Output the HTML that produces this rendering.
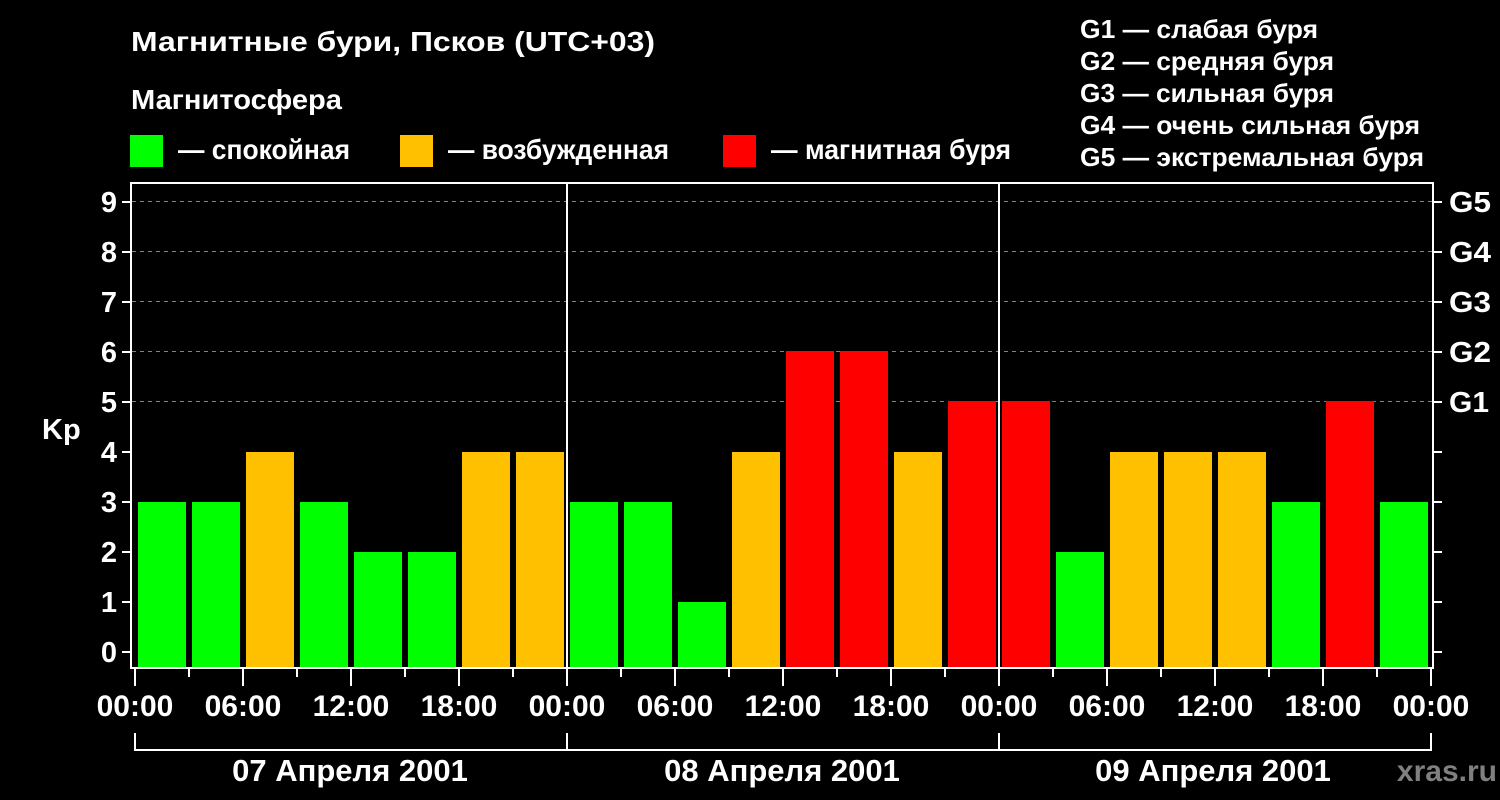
<!DOCTYPE html>
<html><head><meta charset="utf-8"><style>
html,body{margin:0;padding:0;background:#000;}
svg{display:block;font-family:"Liberation Sans",Arial,sans-serif;font-weight:bold;}
</style></head><body>
<svg width="1500" height="800" viewBox="0 0 1500 800" xmlns="http://www.w3.org/2000/svg">
<rect width="1500" height="800" fill="#000"/>
<g fill="#fff">
<text x="131" y="51" font-size="28" textLength="524" lengthAdjust="spacingAndGlyphs">Магнитные бури, Псков (UTC+03)</text>
<text x="131" y="109" font-size="28" textLength="211" lengthAdjust="spacingAndGlyphs">Магнитосфера</text>
<text x="178" y="159" font-size="28" textLength="172" lengthAdjust="spacingAndGlyphs">— спокойная</text>
<text x="448" y="159" font-size="28" textLength="221" lengthAdjust="spacingAndGlyphs">— возбужденная</text>
<text x="771" y="159" font-size="28" textLength="240" lengthAdjust="spacingAndGlyphs">— магнитная буря</text>
<g font-size="26">
<text x="1080" y="38" textLength="238" lengthAdjust="spacingAndGlyphs">G1 — слабая буря</text>
<text x="1080" y="70" textLength="254" lengthAdjust="spacingAndGlyphs">G2 — средняя буря</text>
<text x="1080" y="102" textLength="254" lengthAdjust="spacingAndGlyphs">G3 — сильная буря</text>
<text x="1080" y="134" textLength="340" lengthAdjust="spacingAndGlyphs">G4 — очень сильная буря</text>
<text x="1080" y="166" textLength="344" lengthAdjust="spacingAndGlyphs">G5 — экстремальная буря</text>
</g>
</g>
<rect x="130" y="135" width="33" height="32" fill="#00ff00"/>
<rect x="400" y="135" width="33" height="32" fill="#ffc000"/>
<rect x="723" y="135" width="33" height="32" fill="#ff0000"/>

<g stroke="#808080" stroke-width="1" stroke-dasharray="4,4">
<line x1="132" y1="201.5" x2="1432" y2="201.5"/>
<line x1="132" y1="251.5" x2="1432" y2="251.5"/>
<line x1="132" y1="301.5" x2="1432" y2="301.5"/>
<line x1="132" y1="351.5" x2="1432" y2="351.5"/>
<line x1="132" y1="401.5" x2="1432" y2="401.5"/>
</g>

<g>
<rect x="138" y="502" width="48" height="166" fill="#00ff00"/>
<rect x="192" y="502" width="48" height="166" fill="#00ff00"/>
<rect x="246" y="452" width="48" height="216" fill="#ffc000"/>
<rect x="300" y="502" width="48" height="166" fill="#00ff00"/>
<rect x="354" y="552" width="48" height="116" fill="#00ff00"/>
<rect x="408" y="552" width="48" height="116" fill="#00ff00"/>
<rect x="462" y="452" width="48" height="216" fill="#ffc000"/>
<rect x="516" y="452" width="48" height="216" fill="#ffc000"/>
<rect x="570" y="502" width="48" height="166" fill="#00ff00"/>
<rect x="624" y="502" width="48" height="166" fill="#00ff00"/>
<rect x="678" y="602" width="48" height="66" fill="#00ff00"/>
<rect x="732" y="452" width="48" height="216" fill="#ffc000"/>
<rect x="786" y="351" width="48" height="317" fill="#ff0000"/>
<rect x="840" y="351" width="48" height="317" fill="#ff0000"/>
<rect x="894" y="452" width="48" height="216" fill="#ffc000"/>
<rect x="948" y="401" width="48" height="267" fill="#ff0000"/>
<rect x="1002" y="401" width="48" height="267" fill="#ff0000"/>
<rect x="1056" y="552" width="48" height="116" fill="#00ff00"/>
<rect x="1110" y="452" width="48" height="216" fill="#ffc000"/>
<rect x="1164" y="452" width="48" height="216" fill="#ffc000"/>
<rect x="1218" y="452" width="48" height="216" fill="#ffc000"/>
<rect x="1272" y="502" width="48" height="166" fill="#00ff00"/>
<rect x="1326" y="401" width="48" height="267" fill="#ff0000"/>
<rect x="1380" y="502" width="48" height="166" fill="#00ff00"/>
</g>

<g stroke="#fff" stroke-width="2" fill="none">
<rect x="131" y="183" width="1302" height="485"/>
<line x1="567" y1="183" x2="567" y2="668"/>
<line x1="999" y1="183" x2="999" y2="668"/>
<path d="M122 202H131M122 252H131M122 302H131M122 352H131M122 402H131M122 452H131M122 502H131M122 552H131M122 602H131M122 652H131"/>
<path d="M1433 202H1442M1433 252H1442M1433 302H1442M1433 352H1442M1433 402H1442M1433 452H1442M1433 502H1442M1433 552H1442M1433 602H1442M1433 652H1442"/>
<path d="M135 668V686M243 668V686M351 668V686M459 668V686M567 668V686M675 668V686M783 668V686M891 668V686M999 668V686M1107 668V686M1215 668V686M1323 668V686M1431 668V686"/>
<path d="M189 668V677M297 668V677M405 668V677M513 668V677M621 668V677M729 668V677M837 668V677M945 668V677M1053 668V677M1161 668V677M1269 668V677M1377 668V677"/>
<path d="M135 733V750H1431V733M567 733V750M999 733V750"/>
</g>

<g fill="#fff" font-size="29" text-anchor="end">
<text x="117" y="212">9</text><text x="117" y="262">8</text><text x="117" y="312">7</text>
<text x="117" y="362">6</text><text x="117" y="412">5</text><text x="117" y="462">4</text>
<text x="117" y="512">3</text><text x="117" y="562">2</text><text x="117" y="612">1</text>
<text x="117" y="662">0</text>
</g>
<text x="42" y="439" fill="#fff" font-size="29">Kp</text>
<g fill="#fff" font-size="29">
<text x="1449" y="212" textLength="42" lengthAdjust="spacingAndGlyphs">G5</text><text x="1449" y="262" textLength="42" lengthAdjust="spacingAndGlyphs">G4</text><text x="1449" y="312" textLength="42" lengthAdjust="spacingAndGlyphs">G3</text>
<text x="1449" y="362" textLength="42" lengthAdjust="spacingAndGlyphs">G2</text><text x="1449" y="412" textLength="40" lengthAdjust="spacingAndGlyphs">G1</text>
</g>
<g fill="#fff" font-size="30" text-anchor="middle">
<text x="135" y="716">00:00</text><text x="243" y="716">06:00</text><text x="351" y="716">12:00</text><text x="459" y="716">18:00</text>
<text x="567" y="716">00:00</text><text x="675" y="716">06:00</text><text x="783" y="716">12:00</text><text x="891" y="716">18:00</text>
<text x="999" y="716">00:00</text><text x="1107" y="716">06:00</text><text x="1215" y="716">12:00</text><text x="1323" y="716">18:00</text>
<text x="1431" y="716">00:00</text>
</g>
<g fill="#fff" font-size="31" text-anchor="middle">
<text x="350" y="781">07 Апреля 2001</text>
<text x="782" y="781">08 Апреля 2001</text>
<text x="1213" y="781">09 Апреля 2001</text>
</g>
<text x="1497" y="781" fill="#808080" font-size="30" text-anchor="end">xras.ru</text>
</svg>
</body></html>
